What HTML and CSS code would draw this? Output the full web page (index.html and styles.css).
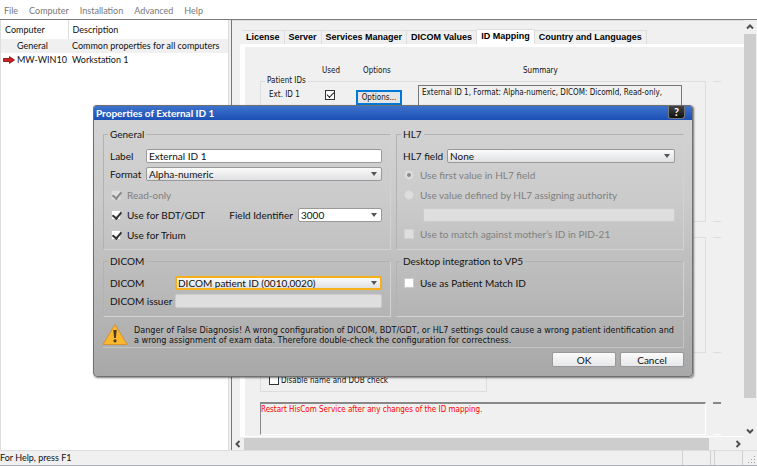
FILE: index.html
```
<!DOCTYPE html>
<html lang="en">
<head>
    <meta charset="utf-8">
    <title>HisCom Service</title>
    <link rel="stylesheet" href="styles.css">
</head>
<body>
    <nav class="menubar">
        <a href="#">File</a>
        <a href="#">Computer</a>
        <a href="#">Installation</a>
        <a href="#">Advanced</a>
        <a href="#">Help</a>
    </nav>

    <main class="workspace">
        <section class="computers">
            <table>
                <thead>
                    <tr><th class="name">Computer</th><th>Description</th></tr>
                </thead>
                <tbody>
                    <tr class="selected"><td class="name"><span class="cell"><span class="marker"></span>General</span></td><td>Common properties for all computers</td></tr>
                    <tr><td class="name"><span class="cell"><span class="marker"><svg width="12" height="8" viewBox="0 0 12 8"><path d="M.5 2.5h6V.6L11.5 4 6.5 7.4V5.5h-6z" fill="#d61f1f" stroke="#6b1010" stroke-width=".8"/></svg></span>MW-WIN10</span></td><td>Workstation 1</td></tr>
                </tbody>
            </table>
        </section>

        <section class="settings">
            <div class="page">
                <div class="tabs">
                    <button class="tab">License</button>
                    <button class="tab">Server</button>
                    <button class="tab">Services Manager</button>
                    <button class="tab">DICOM Values</button>
                    <button class="tab active">ID Mapping</button>
                    <button class="tab">Country and Languages</button>
                </div>
                <div class="tab-page">
                    <div class="column-heads">
                        <span>Used</span>
                        <span>Options</span>
                        <span class="summary-head">Summary</span>
                    </div>
                    <div class="group-line">
                        <fieldset class="group patient-ids">
                            <legend>Patient IDs</legend>
                            <div class="id-row">
                                <label for="ext-id">Ext. ID 1</label>
                                <input type="checkbox" id="ext-id" class="classic-check" checked>
                                <button class="options">Options...</button>
                                <div class="summary">External ID 1, Format: Alpha-numeric, DICOM: DicomId, Read-only,</div>
                            </div>
                        </fieldset>
                        <div class="group stub"></div>
                    </div>
                    <div class="group-line second">
                        <div class="group"></div>
                        <div class="group stub"></div>
                    </div>
                    <div class="group dob">
                        <input type="checkbox" id="dob" class="classic-check">
                        <label for="dob">Disable name and DOB check</label>
                    </div>
                    <div class="group-line restart">
                        <div class="notice">Restart HisCom Service after any changes of the ID mapping.</div>
                        <div class="notice stub"></div>
                    </div>
                </div>
            </div>
            <div class="scroll vertical">
                <svg width="12" height="14" viewBox="0 0 12 14"><path d="M3 8.5l3-3 3 3" /></svg>
                <div class="thumb"></div>
                <svg width="12" height="14" viewBox="0 0 12 14"><path d="M3 5.5l3 3 3-3" /></svg>
            </div>
            <div class="scroll horizontal">
                <svg width="12" height="12" viewBox="0 0 12 12"><path d="M7.5 3l-3 3 3 3" /></svg>
                <div class="thumb"></div>
                <svg width="12" height="12" viewBox="0 0 12 12"><path d="M4.5 3l3 3-3 3" /></svg>
            </div>
        </section>
    </main>

    <footer class="statusbar">
        <span class="help-text">For Help, press F1</span>
        <span class="pane wide"></span>
        <span class="pane"></span>
        <span class="pane wide"></span>
        <span class="pane end"><svg width="10" height="10" viewBox="0 0 10 10"><path d="M7 1h1v1H7zM4 4h1v1H4zM7 4h1v1H7zM1 7h1v1H1zM4 7h1v1H4zM7 7h1v1H7z" fill="#a0a0a0"/></svg></span>
    </footer>

    <div class="dialog" role="dialog" aria-labelledby="dialog-title">
        <div class="titlebar">
            <h1 id="dialog-title">Properties of External ID 1</h1>
            <button class="help">?</button>
        </div>
        <form class="dialog-body">
            <div class="boxes">
                <fieldset>
                    <legend>General</legend>
                    <div class="row general-row">
                        <label for="label">Label</label>
                        <input type="text" id="label" value="External ID 1">
                    </div>
                    <div class="row general-row">
                        <label for="format">Format</label>
                        <span class="select"><select id="format"><option>Alpha-numeric</option></select></span>
                    </div>
                    <div class="check">
                        <input type="checkbox" id="read-only" checked disabled>
                        <label for="read-only">Read-only</label>
                    </div>
                    <div class="check">
                        <input type="checkbox" id="bdt" checked>
                        <label for="bdt">Use for BDT/GDT</label>
                        <label for="field-id" class="field-label">Field Identifier</label>
                        <span class="select plain"><select id="field-id"><option>3000</option></select></span>
                    </div>
                    <div class="check">
                        <input type="checkbox" id="trium" checked>
                        <label for="trium">Use for Trium</label>
                    </div>
                </fieldset>

                <fieldset>
                    <legend>HL7</legend>
                    <div class="row hl7-row">
                        <label for="hl7-field">HL7 field</label>
                        <span class="select"><select id="hl7-field"><option>None</option></select></span>
                    </div>
                    <div class="check">
                        <input type="radio" name="hl7" id="first-value" checked disabled>
                        <label for="first-value">Use first value in HL7 field</label>
                    </div>
                    <div class="check">
                        <input type="radio" name="hl7" id="authority" disabled>
                        <label for="authority">Use value defined by HL7 assigning authority</label>
                    </div>
                    <input type="text" class="authority" aria-label="HL7 assigning authority" disabled>
                    <div class="check">
                        <input type="checkbox" id="mother" disabled>
                        <label for="mother">Use to match against mother’s ID in PID-21</label>
                    </div>
                </fieldset>

                <fieldset>
                    <legend>DICOM</legend>
                    <div class="row dicom-row">
                        <label for="dicom">DICOM</label>
                        <span class="select focused"><select id="dicom"><option>DICOM patient ID (0010,0020)</option></select></span>
                    </div>
                    <div class="row dicom-row">
                        <label for="issuer">DICOM issuer</label>
                        <input type="text" id="issuer" disabled>
                    </div>
                </fieldset>

                <fieldset>
                    <legend>Desktop integration to VP5</legend>
                    <div class="check compact">
                        <input type="checkbox" id="match">
                        <label for="match">Use as Patient Match ID</label>
                    </div>
                </fieldset>
            </div>

            <div class="warning">
                <svg width="26" height="23" viewBox="0 0 26 23"><path d="M13 1.5L25 21.5H1z" fill="#fbb82f" stroke="#d8922a" stroke-linejoin="round"/><path d="M11.3 7h3.4l-.8 8h-1.8z" fill="#4a3a22"/><circle cx="13" cy="17.8" r="1.6" fill="#4a3a22"/></svg>
                <p>Danger of False Diagnosis! A wrong configuration of DICOM, BDT/GDT, or HL7 settings could cause a wrong patient identification and<br>a wrong assignment of exam data. Therefore double-check the configuration for correctness.</p>
            </div>

            <div class="buttons">
                <button type="button">OK</button>
                <button type="button">Cancel</button>
            </div>
        </form>
    </div>
</body>
</html>
```

FILE: styles.css
```
* {
    box-sizing: border-box;
}
body {
    margin: 0;
    height: 100vh;
    display: flex;
    flex-direction: column;
    overflow: hidden;
    background-color: #f0f0f0;
    color: #111;
    font-family: Lato, "Open Sans", sans-serif;
    font-size: 9px;
    line-height: 14px;
}
button, input, select {
    font: inherit;
    color: inherit;
    margin: 0;
    padding: 0;
}
fieldset {
    margin: 0;
    min-width: 0;
}

/* Menu */
.menubar {
    display: flex;
    gap: 11px;
    padding: 4px 4px 1px;
    background-color: #fff;
}
.menubar a {
    color: #777;
    text-decoration: none;
}

/* Main window */
.workspace {
    flex: 1;
    display: flex;
    min-height: 0;
    border-top: 1px solid #7a7a7a;
}
.computers {
    flex: 0 0 229px;
    background-color: #fff;
    border-left: 1px solid #ddd;
    border-right: 1px solid #ddd;
}
.computers table {
    width: 100%;
    border-collapse: collapse;
    table-layout: fixed;
}
.computers th {
    height: 19px;
    padding: 0 4px;
    font-weight: normal;
    text-align: left;
}
.computers th.name {
    border-right: 1px solid #ddd;
}
.computers td {
    height: 14px;
    padding: 0 4px;
    white-space: nowrap;
}
.computers .name {
    width: 67px;
}
.computers td.name {
    padding: 0 0 0 2px;
}
.cell {
    display: flex;
    align-items: center;
}
.marker {
    width: 14px;
    height: 8px;
    line-height: 0;
}
.selected {
    background-color: #f0f0f0;
}
.settings {
    flex: 1;
    display: grid;
    grid-template-columns: minmax(0, 1fr) 12px;
    grid-template-rows: minmax(0, 1fr) 12px;
    margin-left: 2px;
    padding-right: 1px;
    border-left: 1px solid #777;
    overflow: hidden;
}
.page {
    display: flex;
    flex-direction: column;
    padding: 8px 0 1px 8px;
    border-top: 1px solid #ddd;
}
.tabs {
    display: flex;
    align-items: flex-end;
    padding-left: 2px;
    font-family: "Liberation Sans", Arial, sans-serif;
    font-weight: bold;
    line-height: 12px;
}
.tab {
    height: 14px;
    padding: 0 4px 1px;
    background-color: #f0f0f0;
    border: 1px solid #ddd;
    border-width: 1px 1px 0 0;
    color: #000;
    white-space: nowrap;
}
.tab.active {
    height: 15px;
    padding: 0 4px 2px;
    background-color: #fff;
}
.tab-page {
    flex: 1;
    padding: 17px 23px 0 15px;
    border: solid #fff;
    border-width: 3px 0 1px 5px;
    font-family: "DejaVu Sans Condensed", Tahoma, sans-serif;
    font-size: 8px;
    line-height: 14px;
}
.column-heads {
    display: grid;
    grid-template-columns: 41px 56px 1fr;
    height: 10px;
    padding-left: 62px;
}
.summary-head {
    padding-left: 104px;
}
.group {
    border: 1px solid #ddd;
}
.group-line {
    display: grid;
    grid-template-columns: minmax(0, 1fr) 8px;
    gap: 7px;
}
.stub {
    border-left: 0;
    border-right: 0;
}
.patient-ids {
    height: 148px;
    padding: 0 23px 0 8px;
}
.patient-ids legend {
    height: 14px;
    margin-left: -4px;
    padding: 0 2px;
}
.patient-ids + .stub {
    margin-top: 7px;
}
.id-row {
    display: flex;
    align-items: flex-start;
}
.id-row label {
    width: 56px;
}
.classic-check {
    appearance: none;
    width: 10px;
    height: 10px;
    background-color: #fff;
    border: 1px solid #333;
}
.id-row .classic-check {
    margin: 2px 21px 0 0;
}
.classic-check:checked::before {
    content: "";
    display: block;
    width: 6px;
    height: 3px;
    margin: 1px;
    border: solid #222;
    border-width: 0 0 1px 1px;
    transform: rotate(-45deg);
}
.options {
    width: 46px;
    height: 15px;
    margin: 2px 16px 0 0;
    border: 2px solid #0078d7;
    background-color: #e5e5e5;
    line-height: 10px;
}
.summary {
    flex: 1;
    height: 28px;
    margin-top: -3px;
    padding-left: 3px;
    border: 1px solid #777;
    white-space: nowrap;
}
.second {
    height: 116px;
    margin-top: 15px;
}
.dob {
    display: flex;
    gap: 2px;
    width: 227px;
    height: 32px;
    margin-top: 7px;
    padding: 13px 0 0 8px;
}
.dob .classic-check {
    margin-top: 1px;
}
.restart {
    height: 33px;
    margin-top: 10px;
}
.notice {
    border: solid #fff;
    border-width: 2px 1px 1px 1px;
    border-top-color: #888;
    border-left-color: #888;
    color: #f00;
    line-height: 11px;
    white-space: nowrap;
}
.notice.stub {
    border-left: 0;
    border-right: 0;
}

/* Scrollbars */
.scroll {
    display: flex;
    background-color: #f0f0f0;
}
.scroll svg {
    flex: none;
    fill: none;
    stroke: #505050;
    stroke-width: 2;
}
.thumb {
    background-color: #cdcdcd;
}
.vertical {
    flex-direction: column;
    justify-content: space-between;
}
.vertical .thumb {
    flex: 0 1 364px;
    margin-bottom: auto;
}
.horizontal .thumb {
    flex: 0 1 465px;
    margin-right: auto;
}

/* Status bar */
.statusbar {
    display: flex;
    flex: 0 0 16px;
    border-top: 1px solid #ddd;
    border-bottom: 1px solid #b0b4bc;
}
.help-text {
    flex: 1;
}
.pane {
    width: 4px;
    border-left: 1px solid #d0d0d0;
}
.pane.wide {
    width: 28px;
}
.pane.end {
    display: flex;
    align-items: flex-end;
    justify-content: flex-end;
    width: 15px;
}

/* Dialog */
.dialog {
    position: absolute;
    left: 93px;
    top: 105px;
    width: 600px;
    background: linear-gradient(#d4d4d4, #cbcbcb 35%, #a8a8a8);
    border: 1px solid #707070;
    border-radius: 3px 3px 4px 4px;
    box-shadow: 1px 1px 2px rgba(0,0,0,0.5);
    font-size: 10px;
}
.titlebar {
    display: flex;
    justify-content: space-between;
    height: 14px;
    padding: 0 7px 0 2px;
    background: linear-gradient(#3d73cc, #1d50b6);
    border-radius: 2px 2px 0 0;
}
.titlebar h1 {
    margin: 0;
    color: #fff;
    font-size: 10px;
    line-height: 14px;
}
.help {
    width: 17px;
    height: 13px;
    background: linear-gradient(#444, #111);
    border: 1px solid #777;
    border-top: 0;
    border-radius: 0 0 3px 3px;
    color: #fff;
    font-size: 11px;
    font-weight: bold;
    line-height: 10px;
}
.dialog-body {
    padding: 7px 8px 9px 9px;
}
.boxes {
    display: grid;
    grid-template-columns: 1fr 1fr;
    gap: 4px 5px;
}
.dialog fieldset {
    padding: 8px 8px 4px 6px;
    border: 1px solid #d2d2d2;
    border-top-color: #b2b2b2;
    border-left-color: #b2b2b2;
}
.dialog legend {
    padding: 0 2px;
    margin-left: -2px;
    height: 14px;
}
.row {
    display: grid;
    align-items: center;
    height: 14px;
    margin-bottom: 4px;
}
.general-row {
    grid-template-columns: 36px 1fr;
}
.hl7-row {
    grid-template-columns: 44px 1fr;
    margin-bottom: 2px;
}
.dicom-row {
    grid-template-columns: 65px 1fr;
}
.dialog input[type="text"], .dialog select {
    display: block;
    width: 100%;
    height: 14px;
    padding: 0 2px;
    background-color: #fff;
    border: 1px solid #999;
    border-radius: 2px;
    line-height: 12px;
}
.dialog input[type="text"]:disabled {
    background-color: #dedede;
    border-color: #ccc;
}
.select {
    position: relative;
    display: block;
}
.dialog select {
    appearance: none;
    background: linear-gradient(#fafafa, #dfe0e2);
}
.dialog .plain select {
    background: #fff;
}
.dialog .focused select {
    border: 2px solid #f5b01c;
    padding: 0 1px;
    line-height: 10px;
}
.select::after {
    content: "";
    position: absolute;
    right: 5px;
    top: 5px;
    border: solid transparent;
    border-width: 4px 3px 0;
    border-top-color: #555;
}
.check {
    display: flex;
    align-items: center;
    height: 20px;
}
.check.compact {
    height: 14px;
}
.check input {
    appearance: none;
    flex: none;
    width: 10px;
    height: 10px;
    margin: 0 6px 0 1px;
    background-color: #fff;
    border: 1px solid #ccc;
}
.check input[type="radio"] {
    border-radius: 50%;
}
.check input[type="checkbox"]:checked::before {
    content: "";
    display: block;
    width: 4px;
    height: 7px;
    margin: -1px 0 0 2px;
    border: solid #333;
    border-width: 0 2px 2px 0;
    transform: rotate(40deg);
}
.check input[type="radio"]:checked::before {
    content: "";
    display: block;
    width: 4px;
    height: 4px;
    margin: 2px;
    border-radius: 50%;
    background-color: #8a8a8a;
}
.check input:disabled {
    background-color: #dedede;
    border-color: #d2d2d2;
}
.check input[type="checkbox"]:disabled::before {
    border-color: #888;
}
.check input:disabled + label {
    color: #808080;
}
.field-label {
    margin-left: auto;
    padding-right: 5px;
}
.select.plain {
    width: 84px;
}
.dialog input.authority {
    width: calc(100% - 20px);
    margin: 3px 0 2px 20px;
}
.warning {
    display: flex;
    gap: 6px;
    margin-top: 3px;
    border: 1px solid #c4c4c4;
    border-width: 0 1px 1px 0;
    font-family: "DejaVu Sans Condensed", Tahoma, sans-serif;
    font-size: 9px;
    line-height: 10px;
}
.warning svg {
    flex: none;
    margin: 3px 0 1px -1px;
}
.warning p {
    margin: 5px 0 0;
    white-space: nowrap;
}
.buttons {
    display: flex;
    justify-content: flex-end;
    gap: 4px;
    margin-top: 4px;
}
.buttons button {
    width: 64px;
    height: 15px;
    background: linear-gradient(#fbfbfb, #e6e7e9);
    border: 1px solid #999;
    border-radius: 2px;
    line-height: 12px;
}
```
